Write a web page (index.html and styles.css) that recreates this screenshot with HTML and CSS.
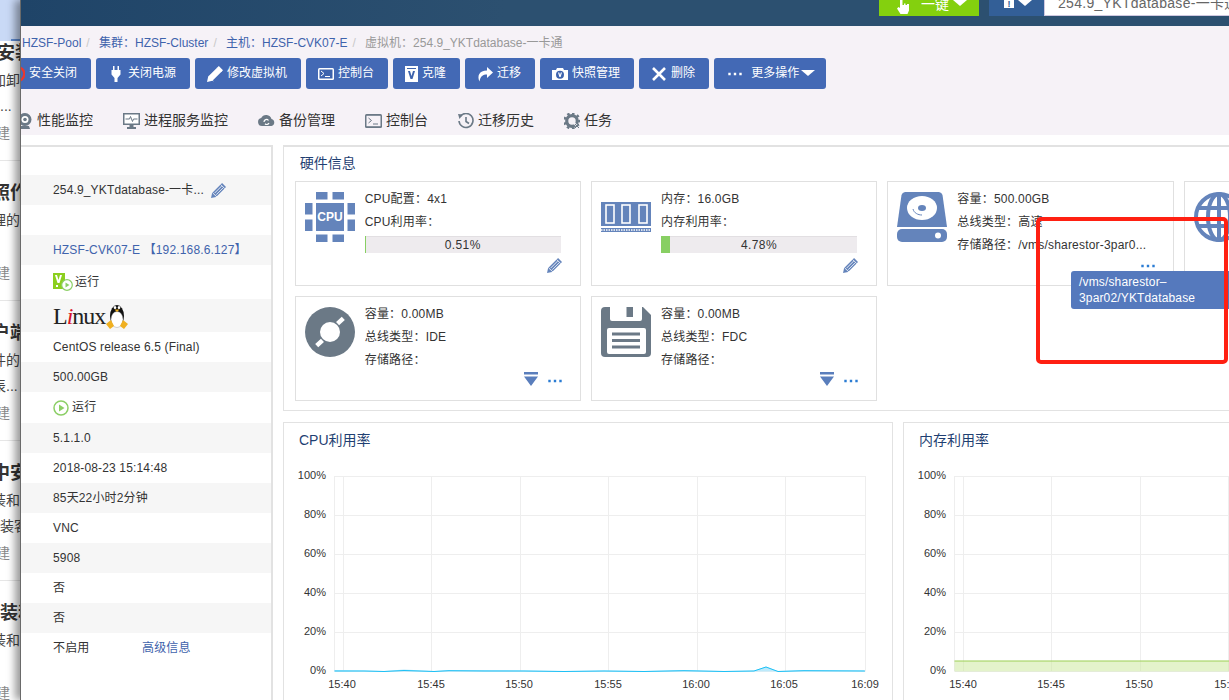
FILE: index.html
```html
<!DOCTYPE html>
<html lang="zh-CN">
<head>
<meta charset="utf-8">
<title>虚拟机 254.9_YKTdatabase-一卡通</title>
<link rel="stylesheet" href="styles.css">
</head>
<body>
<svg class="defs" width="0" height="0" aria-hidden="true">
  <symbol id="pencil" viewBox="0 0 16 16"><path fill="currentColor" d="M0 16l1.2-5.4L10.8 1l1-1 4.2 4.200-1 1-9.600 9.600z"/><path fill="none" stroke="#fff" stroke-width=".9" d="M1.800 10.600l4.500 4.300M3.800 10.800l7.500-7.500M5.500 12.500l7.500-7.500M10.500 1.800l4.200 4.200"/></symbol>
  <symbol id="play" viewBox="0 0 16 16"><circle cx="8" cy="8" r="7" fill="#fff" stroke="#8ccf66" stroke-width="1.500"/><path fill="#8ccf66" d="M6 4.500l5.500 3.500L6 11.500z"/></symbol>
  <symbol id="dots" viewBox="0 0 14 4"><path fill="currentColor" d="M.3 .8h2.400v2.400H.3zM5.800 .8h2.400v2.400H5.800zM11.300 .8h2.400v2.400h-2.400z"/></symbol>
  <symbol id="filter" viewBox="0 0 14 14"><path fill="currentColor" d="M0 0h14v2.500H0zM0 4.500h14L7 14z"/></symbol>
  <symbol id="chart-grid" viewBox="0 0 608 240">
    <path fill="none" stroke="#eeeeee" d="M50.500 14.500H581.500M50.500 53.500H581.500M50.500 92.500H581.500M50.500 131.500H581.500M50.500 170.500H581.500M50.500 209.500H581.500M50.500 14V209M59.500 14V209M147.500 14V209M236.500 14V209M324.500 14V209M413.500 14V209M501.500 14V209M581.500 14V209"/>
  </symbol>
</svg>

<div class="desktop">
  <aside class="backdrop">
    <div class="bg-top"><span class="bg-tab"></span></div>
    <div class="bg-item bg-first">
      <div class="bg-title bg-s1">安装</div>
      <div class="bg-desc bg-s2">加卸</div>
      <div class="bg-desc bg-s0">...</div>
      <div class="bg-foot">建</div>
    </div>
    <div class="bg-item">
      <div class="bg-title bg-s2">照作</div>
      <div class="bg-desc bg-s2">理的</div>
      <div class="bg-desc"></div>
      <div class="bg-foot">建</div>
    </div>
    <div class="bg-item">
      <div class="bg-title bg-s2">户端</div>
      <div class="bg-desc bg-s2">件的</div>
      <div class="bg-desc bg-s3">表...</div>
      <div class="bg-foot">建</div>
    </div>
    <div class="bg-item">
      <div class="bg-title bg-s2">中安</div>
      <div class="bg-desc bg-s2">装和</div>
      <div class="bg-desc bg-s0">装客</div>
      <div class="bg-foot">建</div>
    </div>
    <div class="bg-item">
      <div class="bg-title bg-s0">装和</div>
      <div class="bg-desc bg-s2">装和</div>
      <div class="bg-desc"></div>
      <div class="bg-foot">建</div>
    </div>
  </aside>

  <div class="window">
    <header class="topbar">
      <div class="key-btn">
        <svg class="hand" viewBox="0 0 12 14"><path fill="#fff" d="M3 0h2.500v5H7V3.500h1.500V5H10V4h2v6.500L10.500 14h-7L0 8.500 1.500 7 3 8z"/></svg>
        <span>一键</span><i class="caret"></i>
      </div>
      <div class="help-btn"><span class="help-glyph">!</span><i class="caret"></i></div>
      <div class="search">254.9_YKTdatabase-一卡通</div>
    </header>

    <section class="head">
      <nav class="crumbs">
        <a>HZSF-Pool</a><span class="sep">/</span>
        <a>集群：HZSF-Cluster</a><span class="sep">/</span>
        <a>主机：HZSF-CVK07-E</a><span class="sep">/</span>
        <span class="crumb-now">虚拟机：254.9_YKTdatabase-一卡通</span>
      </nav>
      <div class="toolbar">
        <button class="btn"><svg class="btn-ic" viewBox="0 0 16 16"><circle cx="8.500" cy="8" r="6.800" fill="none" stroke="#e8382f" stroke-width="2.400"/></svg>安全关闭</button>
        <button class="btn"><svg class="btn-ic" viewBox="0 0 16 16"><path fill="#fff" d="M5 0h1.500v4h3V0H11v4h1.500v4.500L9.500 12v4h-3v-4L3.500 8.500V4H5z"/></svg>关闭电源</button>
        <button class="btn"><svg class="btn-ic" viewBox="0 0 16 16"><use href="#pencil"/></svg>修改虚拟机</button>
        <button class="btn"><svg class="btn-ic" viewBox="0 0 16 16"><rect x="0" y="2" width="16" height="12" rx="1.500" fill="#fff"/><rect x="1.500" y="3.500" width="13" height="9" fill="#3d63ad"/><path fill="none" stroke="#fff" d="M3 5l3 2.500L3 10M7 10.500h5"/></svg>控制台</button>
        <button class="btn btn-narrow"><svg class="btn-ic-sm" viewBox="0 0 13 16"><path fill="#fff" d="M0 0h13v16H0z"/><path fill="#3d63ad" d="M2 2h9v1H2zM3 5h2l1.500 5L8 5h2l-2.500 8h-2z"/></svg>克隆</button>
        <button class="btn"><svg class="btn-ic" viewBox="0 0 16 16"><path fill="#fff" d="M10 1l6 5.500L10 12V8.500C6 8.500 3.500 10 2.500 15.500 0 10 2 4.500 10 4.500z"/></svg>迁移</button>
        <button class="btn"><svg class="btn-ic" viewBox="0 0 16 16"><path fill="#fff" d="M0 4h4l1-2h6l1 2h4v10H0z"/><circle cx="8" cy="8.800" r="4" fill="#3d63ad"/><path fill="#fff" d="M6 6.500h1.300L8 9l.8-2.500H10L8.600 11H7.400z"/></svg>快照管理</button>
        <button class="btn"><svg class="btn-ic" viewBox="0 0 16 16"><path fill="none" stroke="#fff" stroke-width="2.600" d="M2 2l12 12M14 2L2 14"/></svg>删除</button>
        <button class="btn btn-more"><svg class="more-dots" viewBox="0 0 14 4"><use href="#dots"/></svg>更多操作<i class="caret caret-btn"></i></button>
      </div>
      <nav class="tabs">
        <a class="tab"><svg class="tab-ic" viewBox="0 0 16 16"><circle cx="8" cy="6.500" r="6.500" fill="#6b7986"/><circle cx="8" cy="6.500" r="3.500" fill="#fff"/><circle cx="8" cy="6.500" r="1.800" fill="#6b7986"/><path fill="#6b7986" d="M4 13h8l1 3H3z"/></svg>性能监控</a>
        <a class="tab"><svg class="tab-ic tab-ic-wide" viewBox="0 0 17 16"><path fill="#6b7986" d="M0 0h17v12H10.500v2H13v2H4v-2h2.500v-2H0z"/><path fill="#fff" d="M1.500 1.500h14v9h-14z"/><path fill="none" stroke="#6b7986" d="M2.500 6h4l1-2.500 2 5 1-2.500h4"/></svg>进程服务监控</a>
        <a class="tab"><svg class="tab-ic tab-ic-wide" viewBox="0 0 17 16"><path fill="#6b7986" d="M4 13a4 4 0 0 1-.8-7.900A5.500 5.500 0 0 1 13.500 6 3.600 3.600 0 0 1 13.500 13z"/><path fill="none" stroke="#fff" stroke-width="1.200" d="M6 9a2.500 2.500 0 0 1 4.500-1.500M11 10a2.500 2.500 0 0 1-4 .8"/></svg>备份管理</a>
        <a class="tab"><svg class="tab-ic tab-ic-wide" viewBox="0 0 17 16"><rect y="1" width="17" height="14" rx="1.500" fill="#6b7986"/><rect x="1.500" y="2.800" width="14" height="10.400" fill="#f6f2f7"/><path fill="none" stroke="#6b7986" d="M3.500 5l3 2.500-3 2.500M8 11h5"/></svg>控制台</a>
        <a class="tab"><svg class="tab-ic" viewBox="0 0 16 16"><path fill="none" stroke="#6b7986" stroke-width="1.600" d="M2.200 3.500A7 7 0 1 1 1 8M8 4v4.500l3 2"/><path fill="#6b7986" d="M0 1l5 .5L1.500 6z"/></svg>迁移历史</a>
        <a class="tab"><svg class="tab-ic" viewBox="0 0 16 16"><circle cx="8" cy="8" r="5.300" fill="none" stroke="#6b7986" stroke-width="3.200"/><path fill="none" stroke="#6b7986" stroke-width="2.500" stroke-dasharray="2.500 2.700" d="M8 .5a7.500 7.500 0 1 1-.01 0"/><path fill="none" stroke="#f6f2f7" stroke-width="2" d="M10 10l6 6"/><path fill="none" stroke="#6b7986" d="M11 11l4 4M15 11l-4 4"/></svg>任务</a>
      </nav>
    </section>

    <main class="body">
      <aside class="side">
        <div class="row row-alt">254.9_YKTdatabase-一卡...<svg class="side-pencil" viewBox="0 0 16 16"><use href="#pencil"/></svg></div>
        <div class="row"></div>
        <div class="row row-alt row-link">HZSF-CVK07-E 【192.168.6.127】</div>
        <div class="row row-h34">
          <span class="vm-status">
            <svg class="vm-ic" viewBox="0 0 20 18"><path fill="#8ccf1f" d="M0 0h12v16H0z"/><path fill="#fff" d="M2 2h2l1.500 5L7 2h2L6.500 10h-2z"/><rect x="3" y="12" width="2" height="2" fill="#fff"/><circle cx="14" cy="12" r="5.300" fill="#fff" stroke="#8ccf66" stroke-width="1.200"/><path fill="#8ccf66" d="M12.500 9.500l4 2.500-4 2.500z"/></svg>
            运行
          </span>
        </div>
        <div class="row row-alt row-h33">
          <span class="linux-logo">L<em>i</em>nux</span>
          <svg class="penguin" viewBox="0 0 22 26"><ellipse cx="11" cy="13" rx="7" ry="11" fill="#111"/><ellipse cx="11" cy="16.500" rx="6" ry="8" fill="#fff" stroke="#888" stroke-width=".4"/><ellipse cx="9" cy="4.500" rx="1.300" ry="1.600" fill="#fff"/><ellipse cx="13" cy="4.500" rx="1.300" ry="1.600" fill="#fff"/><path fill="#f0b020" d="M8.500 6.500h5L11 9zM0 21l5-4 3 6-4 3zM22 21l-5-4-3 6 4 3z"/></svg>
        </div>
        <div class="row">CentOS release 6.5 (Final)</div>
        <div class="row row-alt">500.00GB</div>
        <div class="row row-h31"><svg class="play-ic" viewBox="0 0 16 16"><use href="#play"/></svg>运行</div>
        <div class="row row-alt">5.1.1.0</div>
        <div class="row">2018-08-23 15:14:48</div>
        <div class="row row-alt">85天22小时2分钟</div>
        <div class="row">VNC</div>
        <div class="row row-alt">5908</div>
        <div class="row">否</div>
        <div class="row row-alt">否</div>
        <div class="row"><span class="row-key">不启用</span><a class="link">高级信息</a></div>
      </aside>

      <div class="content">
        <section class="hardware">
          <h2 class="panel-title">硬件信息</h2>
          <div class="cards">
            <article class="card">
              <svg class="card-ic" viewBox="0 0 50 50"><g fill="#6484bb"><rect x="11" y="11" width="28" height="28"/><rect x="11" width="11.500" height="7.500"/><rect x="27.500" width="11.500" height="7.500"/><rect x="11" y="42.500" width="11.500" height="7.500"/><rect x="27.500" y="42.500" width="11.500" height="7.500"/><rect y="11" width="7.500" height="11.500"/><rect y="27.500" width="7.500" height="11.500"/><rect x="42.500" y="11" width="7.500" height="11.500"/><rect x="42.500" y="27.500" width="7.500" height="11.500"/></g><text class="cpu-label" x="25" y="29" text-anchor="middle">CPU</text></svg>
              <div class="card-text">
                <div class="line">CPU配置：4x1</div>
                <div class="line">CPU利用率：</div>
                <div class="bar"><span class="bar-fill" style="width:0.51%"></span><span class="bar-num">0.51%</span></div>
                <div class="actions actions-gap"><svg class="act-pencil" viewBox="0 0 16 16"><use href="#pencil"/></svg></div>
              </div>
            </article>
            <article class="card">
              <svg class="card-ic" viewBox="0 0 50 50"><path fill="#6484bb" d="M0 10h50v24H0z"/><path fill="#6484bb" d="M0 36h50v4H0z"/><g fill="none" stroke="#fff" stroke-width="1.600"><rect x="5" y="13" width="8" height="18"/><rect x="21" y="13" width="8" height="18"/><rect x="38" y="13" width="8" height="18"/><path stroke-dasharray="1.500 1" d="M0 38h50"/></g></svg>
              <div class="card-text">
                <div class="line">内存：16.0GB</div>
                <div class="line">内存利用率：</div>
                <div class="bar"><span class="bar-fill" style="width:4.78%"></span><span class="bar-num">4.78%</span></div>
                <div class="actions actions-gap"><svg class="act-pencil" viewBox="0 0 16 16"><use href="#pencil"/></svg></div>
              </div>
            </article>
            <article class="card">
              <svg class="card-ic" viewBox="0 0 50 50"><path fill="#6484bb" d="M8 0h34a4 4 0 0 1 3.500 3L50 35H0L4.500 3A4 4 0 0 1 8 0z"/><ellipse cx="25" cy="16" rx="15" ry="12" fill="#fff"/><ellipse cx="25" cy="16" rx="4" ry="3" fill="#6484bb"/><path fill="none" stroke="#6484bb" stroke-width="1" d="M16 17c1 4 5 6 9 6"/><rect y="37" width="50" height="13" rx="5" fill="#6484bb"/><path fill="none" stroke="#fff" stroke-width="1.500" d="M0 36.300h50"/><circle cx="41" cy="43.500" r="3" fill="#fff"/></svg>
              <div class="card-text">
                <div class="line">容量：500.00GB</div>
                <div class="line">总线类型：高速</div>
                <div class="line">存储路径：/vms/sharestor-3par0...</div>
                <div class="actions actions-dots"><svg class="act-dots" viewBox="0 0 14 4"><use href="#dots"/></svg></div>
              </div>
            </article>
            <article class="card">
              <svg class="card-ic" viewBox="0 0 50 50"><g fill="none" stroke="#6484bb" stroke-width="4"><circle cx="25" cy="25" r="23"/><ellipse cx="25" cy="25" rx="11" ry="23"/><path d="M25 2v46M4 16h42M4 34h42"/></g></svg>
            </article>
            <article class="card">
              <svg class="card-ic" viewBox="0 0 50 50"><circle cx="25" cy="25" r="25" fill="#6b7986"/><circle cx="25" cy="25" r="10" fill="#fff"/><path fill="none" stroke="#fff" stroke-width="4.500" d="M33 17l6-5M17 33l-6 5" transform="rotate(-3 25 25)"/></svg>
              <div class="card-text">
                <div class="line">容量：0.00MB</div>
                <div class="line">总线类型：IDE</div>
                <div class="line">存储路径：</div>
                <div class="actions actions-row"><svg class="act-filter" viewBox="0 0 14 14"><use href="#filter"/></svg><svg class="act-dots" viewBox="0 0 14 4"><use href="#dots"/></svg></div>
              </div>
            </article>
            <article class="card">
              <svg class="card-ic" viewBox="0 0 50 50"><path fill="#6b7986" d="M4 0h38l8 8v38a4 4 0 0 1-4 4H4a4 4 0 0 1-4-4V4a4 4 0 0 1 4-4z"/><path fill="#fff" d="M9 0h32v12a2 2 0 0 1-2 2H11a2 2 0 0 1-2-2z"/><rect x="25.500" width="6.500" height="10" fill="#6b7986"/><rect x="6" y="21" width="39" height="26" rx="2" fill="#fff"/><path fill="none" stroke="#6b7986" stroke-width="3" d="M11 27h28M11 33.500h28M11 40h28"/></svg>
              <div class="card-text">
                <div class="line">容量：0.00MB</div>
                <div class="line">总线类型：FDC</div>
                <div class="line">存储路径：</div>
                <div class="actions actions-row"><svg class="act-filter" viewBox="0 0 14 14"><use href="#filter"/></svg><svg class="act-dots" viewBox="0 0 14 4"><use href="#dots"/></svg></div>
              </div>
            </article>
          </div>
        </section>

        <div class="charts">
          <section class="chart">
            <h2 class="panel-title chart-title">CPU利用率</h2>
            <svg class="plot" viewBox="0 0 608 240">
              <use href="#chart-grid"/>
              <g class="ticks-y"><text x="42" y="17">100%</text><text x="42" y="56">80%</text><text x="42" y="95">60%</text><text x="42" y="134">40%</text><text x="42" y="173">20%</text><text x="42" y="212">0%</text></g>
              <g class="ticks-x"><text x="58" y="226">15:40</text><text x="147" y="226">15:45</text><text x="235" y="226">15:50</text><text x="324" y="226">15:55</text><text x="412" y="226">16:00</text><text x="500" y="226">16:05</text><text x="581" y="226">16:09</text></g>
              <path fill="#bdeafb" d="M50.500 208L80 208.500 100 209 120 207.500 150 209 165 208 200 208 240 208.500 280 209 320 208.500 360 209 400 208 440 209 470 208.500 482 204.500 494 209 520 208 580 208.500V209.500H50.500z"/>
              <path fill="none" stroke="#1cc0f5" d="M50.500 209L80 209 100 209.500 120 208.500 150 209.500 165 208.700 200 209 240 209 280 209.500 320 209 360 209.500 400 208.700 440 209.500 470 209 482 205 494 209.500 520 208.700 581 209"/>
            </svg>
          </section>
          <section class="chart">
            <h2 class="panel-title chart-title">内存利用率</h2>
            <svg class="plot" viewBox="0 0 608 240">
              <use href="#chart-grid"/>
              <g class="ticks-y"><text x="42" y="17">100%</text><text x="42" y="56">80%</text><text x="42" y="95">60%</text><text x="42" y="134">40%</text><text x="42" y="173">20%</text><text x="42" y="212">0%</text></g>
              <g class="ticks-x"><text x="59" y="226">15:40</text><text x="147" y="226">15:45</text><text x="235" y="226">15:50</text><text x="324" y="226">15:55</text></g>
              <path fill="#cdeaa0" fill-opacity=".55" d="M50.500 199H581.500V209.500H50.500z"/>
              <path fill="none" stroke="#9ccf55" stroke-width="1.200" d="M50.500 199H581.500"/>
            </svg>
          </section>
        </div>
      </div>
    </main>
  </div>
</div>

<div class="tooltip">/vms/sharestor–<br>3par02/YKTdatabase</div>
<div class="annotation"></div>
</body>
</html>
```

FILE: styles.css
```css
* { box-sizing: border-box; }
html, body { margin: 0; height: 700px; overflow: hidden; background: #fff; }
body {
  position: relative;
  font: 12px/1.4 "Liberation Sans", "Noto Sans CJK SC", sans-serif;
  color: #333;
}
.defs { position: absolute; }
h2 { margin: 0; font-weight: normal; }
a { color: inherit; }

.desktop { display: flex; width: 1229px; height: 700px; }

/* window behind */
.backdrop { width: 20px; flex: none; overflow: hidden; background: #fff; }
.bg-top { height: 41px; background: #c9d9f6; display: flex; justify-content: flex-end; align-items: flex-end; border-bottom: 0; }
.bg-tab { width: 9px; height: 2px; background: #5e8ad0; }
.bg-item { height: 140px; padding-top: 20px; border-bottom: 1px solid #e6e6e6; white-space: nowrap; }
.bg-first { height: 120px; padding-top: 0; }
.bg-title { height: 24px; line-height: 24px; font-size: 18px; font-weight: bold; color: #333; }
.bg-desc { height: 26px; line-height: 26px; font-size: 14px; color: #444; position: relative; top: 2px; }
.bg-foot { height: 24px; line-height: 24px; font-size: 14px; color: #888; margin-top: 4px; margin-left: -4px; }
.bg-first .bg-foot { margin-top: 4px; }
.bg-s0 { margin-left: 0; }
.bg-s1 { margin-left: -3px; }
.bg-s2 { margin-left: -8px; }
.bg-s3 { margin-left: -8px; }

/* front window */
.window {
  flex: 1;
  min-width: 0;
  position: relative;
  overflow: hidden;
  border-left: 1px solid #6a6a6a;
  background: #fff;
  box-shadow: -5px 0 8px rgba(0, 0, 0, .4);
}

.topbar {
  height: 26px;
  padding-left: 858px;
  display: flex;
  align-items: flex-start;
  overflow: hidden;
  background: linear-gradient(90deg, #1f4468, #2c5070 40%);
}
.key-btn {
  width: 100px;
  height: 16px;
  flex: none;
  padding-left: 18px;
  display: flex;
  align-items: flex-start;
  background: #84d00e;
  color: #fff;
  font-size: 14px;
  line-height: 8px;
  overflow: hidden;
}
.hand { width: 12px; height: 14px; margin-right: 12px; flex: none; }
.caret {
  display: block;
  width: 0;
  height: 0;
  border: 7px solid transparent;
  border-top: 6px solid #fff;
  border-bottom: 0;
}
.key-btn .caret { margin-left: 4px; }
.help-btn {
  width: 55px;
  height: 16px;
  flex: none;
  margin-left: 10px;
  padding-left: 15px;
  display: flex;
  background: #335f97;
  overflow: hidden;
}
.help-glyph {
  width: 10px;
  height: 8px;
  margin-right: 4px;
  background: #fff;
  color: #335f97;
  font-size: 9px;
  font-weight: bold;
  line-height: 8px;
  text-align: center;
}
.search {
  width: 320px;
  height: 16px;
  flex: none;
  padding-left: 13px;
  background: #fff;
  border-bottom: 1px solid #cfc8e0;
  border-left: 1px solid #cfc8e0;
  color: #666;
  font-size: 14px;
  line-height: 7px;
  letter-spacing: .3px;
  overflow: hidden;
}

.head { height: 109px; background: #f6f2f7; }
.crumbs {
  height: 32px;
  padding-top: 9px;
  padding-left: 1px;
  color: #3f63ac;
  line-height: 17px;
  white-space: nowrap;
}
.sep { padding: 0 6px 0 5px; color: #c9c9c9; }
.crumb-now { color: #999; }
.toolbar { display: flex; gap: 5px; margin-left: -24px; }
.btn {
  height: 31px;
  flex: none;
  display: flex;
  align-items: center;
  padding: 0 14px 0 12px;
  border: 0;
  border-radius: 3px;
  background: #4369b5;
  color: #fff;
  font: inherit;
}
.btn-ic { width: 16px; height: 16px; margin-right: 4px; color: #fff; flex: none; }
.btn-ic-sm { width: 13px; height: 16px; margin-right: 4px; flex: none; }
.btn-narrow { padding: 0 14px 0 12px; }
.btn-more { padding: 0 11px 0 9px; }
.more-dots { width: 14px; height: 4px; color: #fff; margin: 0 9px 0 5px; flex: none; }
.caret-btn { margin-left: 2px; margin-top: -2px; }
.tabs { display: flex; gap: 30px; margin-top: 17px; margin-left: -4px; height: 29px; }
.tab { display: flex; align-items: center; font-size: 14px; color: #333; white-space: nowrap; }
.tab-ic { width: 16px; height: 16px; margin-right: 4px; flex: none; }
.tab-ic-wide { width: 17px; }

.body { display: flex; gap: 10px; padding-top: 10px; }

.side {
  width: 252px;
  height: 555px;
  flex: none;
  padding-top: 28px;
  border-top: 2px solid #e2e2e2;
  border-right: 2px solid #e2e2e2;
}
.row {
  height: 30px;
  padding-left: 32px;
  display: flex;
  align-items: center;
  color: #333;
  letter-spacing: .15px;
  white-space: nowrap;
}
.row-alt { background: #f6f6f6; }
.row-link { color: #3f63ac; }
.row-h34 { height: 34px; }
.row-h33 { height: 33px; }
.row-h31 { height: 31px; }
.side-pencil { width: 15px; height: 15px; margin-left: 7px; color: #6484bb; }
.vm-status { display: flex; align-items: center; gap: 2px; }
.vm-ic { width: 20px; height: 18px; }
.play-ic { width: 16px; height: 16px; margin-right: 3px; }
.linux-logo { font: 24px/1 "Liberation Serif", serif; color: #222; letter-spacing: -1px; }
.linux-logo em { color: #d8142a; }
.penguin { width: 22px; height: 26px; margin-left: 1px; }
.row-key { width: 89px; }
.link { color: #3f63ac; }

.content { width: 960px; flex: none; }
.hardware {
  height: 266px;
  border: 1px solid #e2e2e2;
  border-top-width: 2px;
  border-right: 0;
  padding: 6px 0 0 10.700px;
}
.panel-title { font-size: 14px; line-height: 20px; color: #1f3f72; }
.hardware .panel-title { padding-left: 5px; }
.cards {
  display: grid;
  grid-template-columns: repeat(4, 286.300px);
  grid-auto-rows: 105px;
  gap: 10px;
  margin-top: 8px;
}
.card {
  display: flex;
  gap: 10px;
  padding: 5px 18px 0 9px;
  border: 1px solid #e0e0e0;
  overflow: hidden;
}
.card-ic { width: 50px; height: 50px; margin-top: 5px; flex: none; }
.cpu-label { font-size: 12px; font-weight: bold; fill: #fff; }
.card-text { flex: 1; min-width: 0; padding-top: 1px; }
.line { height: 23px; line-height: 23px; letter-spacing: .2px; white-space: nowrap; }
.bar {
  position: relative;
  width: 196px;
  height: 17px;
  margin-top: 2px;
  background: #eeebee;
  border-top: 1px solid #e2dfe2;
  text-align: center;
  line-height: 16px;
}
.bar-fill { position: absolute; left: 0; top: -1px; height: 17px; min-width: 1px; background: #88cf63; }
.bar-num { position: relative; letter-spacing: .4px; }
.actions { display: flex; justify-content: flex-end; align-items: center; color: #6484bb; }
.actions-gap { margin-top: 5px; }
.actions-dots { margin-top: 4px; }
.actions-row { margin-top: 0; gap: 10px; }
.act-pencil { width: 15px; height: 15px; }
.act-dots { width: 14px; height: 4px; color: #2b7cd3; margin-top: 3px; }
.act-filter { width: 14px; height: 14px; color: #5a7ebc; }

.charts { display: flex; gap: 10px; margin-top: 11px; width: 1300px; }
.chart { width: 610px; height: 300px; flex: none; border: 1px solid #e2e2e2; border-bottom: 0; }
.chart-title { padding: 7px 0 0 15px; height: 39px; }
.plot { display: block; width: 608px; height: 240px; }
.plot text { font-size: 11px; font-family: "Liberation Sans", sans-serif; fill: #333; }
.ticks-y text { text-anchor: end; }
.ticks-x text { text-anchor: middle; }

/* overlays */
.tooltip {
  position: absolute;
  left: 1071px;
  top: 271px;
  width: 180px;
  height: 38px;
  padding: 3px 8px;
  border-radius: 3px;
  background: #5579bd;
  color: #fff;
  line-height: 16px;
  letter-spacing: .15px;
}
.annotation {
  position: absolute;
  left: 1036px;
  top: 217px;
  width: 192px;
  height: 147px;
  border: 4px solid #ff2012;
  border-radius: 5px;
}
```
